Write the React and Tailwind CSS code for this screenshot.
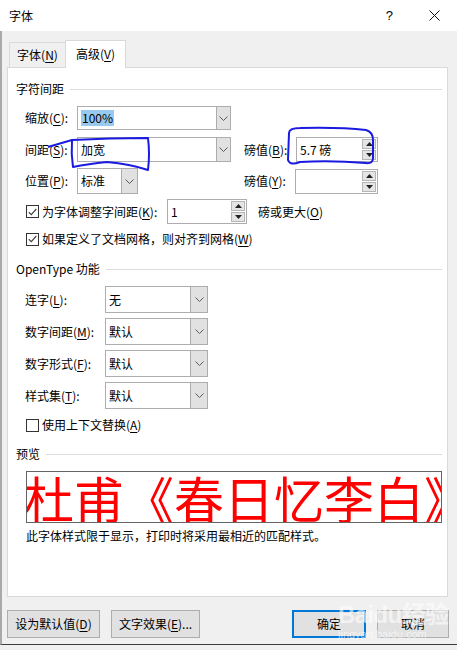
import React from 'react'

const U = ({ children }) => <span className="underline underline-offset-[2px]">{children}</span>

function Chevron() {
    return (
        <svg width="9" height="5" viewBox="0 0 9 5">
            <path d="M0.5 0.5 L4.5 4.5 L8.5 0.5" fill="none" stroke="#5a5a5a" strokeWidth="1" />
        </svg>
    )
}

function Arrow({ up }) {
    return (
        <svg width="7" height="4" viewBox="0 0 7 4">
            {up ? <path d="M0 4 L3.5 0 L7 4 Z" fill="#222" /> : <path d="M0 0 L3.5 4 L7 0 Z" fill="#222" />}
        </svg>
    )
}

function Combo({ box, btn, children }) {
    return (
        <div className={`flex border border-[#adadad] bg-white ${box}`}>
            <div className="flex-1 flex items-center pl-[3px] overflow-hidden">{children}</div>
            <div className={`bg-[#e1e1e1] border-l border-[#adadad] flex items-center justify-center ${btn}`}>
                <Chevron />
            </div>
        </div>
    )
}

function Spin({ box, children }) {
    return (
        <div className={`flex border border-[#adadad] bg-white ${box}`}>
            <div className="flex-1 flex items-center pl-[3px]">{children}</div>
            <div className="flex flex-col w-[15px] py-[1px] pr-[1px] gap-[1px]">
                <div className="flex-1 bg-[#e5e5e5] border border-[#b5b5b5] flex items-center justify-center"><Arrow up /></div>
                <div className="flex-1 bg-[#e5e5e5] border border-[#b5b5b5] flex items-center justify-center"><Arrow /></div>
            </div>
        </div>
    )
}

function Check({ checked }) {
    return (
        <div className="w-[13px] h-[13px] border border-[#333] bg-white flex items-center justify-center">
            {checked && (
                <svg width="9" height="8" viewBox="0 0 9 8">
                    <path d="M0.8 4.2 L3.3 6.6 L8.3 1" fill="none" stroke="#444" strokeWidth="1.2" />
                </svg>
            )}
        </div>
    )
}

function Header({ children }) {
    return (
        <div className="flex items-center pl-[8px] pr-[5px] gap-[6px] h-[16px]">
            <span>{children}</span>
            <div className="flex-1 h-px bg-[#dcdcdc]"></div>
        </div>
    )
}

function App() {
    return (
        <div className="w-[457px] h-[650px] bg-[#f0f0f0] relative overflow-hidden text-[12px] leading-[16px] text-black font-['Noto_Sans_CJK_SC',sans-serif]">
            {/* title bar */}
            <div className="h-[31px] bg-white flex items-center pl-[9px]">
                <span>字体</span>
                <span className="ml-auto mr-[36px] text-[13px] font-['Liberation_Sans',sans-serif]">?</span>
                <svg width="11" height="11" viewBox="0 0 11 11" className="mr-[17px]">
                    <path d="M0.5 0.5 L10.5 10.5 M10.5 0.5 L0.5 10.5" stroke="#111" strokeWidth="1" />
                </svg>
            </div>

            <div className="border-l-2 border-[#a9a9a9] h-[614px] border-b border-b-[#3c3c3c]">
                {/* tabs */}
                <div className="flex items-end pt-[9px] pl-[7px]">
                    <div className="w-[56px] h-[25px] border-l border-t border-[#d9d9d9] flex items-center justify-center">
                        <span>字体(<U>N</U>)</span>
                    </div>
                    <div className="w-[61px] h-[28px] bg-white border-l border-t border-r border-[#d9d9d9] mb-[-1px] relative z-10 flex items-center justify-center pb-[2px]">
                        <span>高级(<U>V</U>)</span>
                    </div>
                </div>

                {/* tab page */}
                <div className="ml-[5px] w-[441px] h-[530px] bg-white border border-[#d9d9d9] flex flex-col">
                    <div className="mt-[13px]"><Header>字符间距</Header></div>

                    <div className="flex items-center h-[24px] mt-[9px] pl-[17px]">
                        <div className="w-[52px]">缩放(<U>C</U>):</div>
                        <Combo box="w-[154px] h-[24px]" btn="w-[14px]">
                            <span className="bg-[#99c9ef] px-[1px]">100%</span>
                        </Combo>
                    </div>

                    <div className="flex items-center h-[25px] mt-[7px] pl-[17px]">
                        <div className="w-[52px]">间距(<U>S</U>):</div>
                        <Combo box="w-[154px] h-[25px]" btn="w-[14px]">加宽</Combo>
                        <div className="w-[52px] ml-[13px]">磅值(<U>B</U>):</div>
                        <Spin box="w-[82px] h-[25px]">5.7 磅</Spin>
                    </div>

                    <div className="flex items-center h-[26px] mt-[6px] pl-[17px]">
                        <div className="w-[52px]">位置(<U>P</U>):</div>
                        <Combo box="w-[61px] h-[26px]" btn="w-[16px]">标准</Combo>
                        <div className="w-[51px] ml-[106px]">磅值(<U>Y</U>):</div>
                        <Spin box="w-[83px] h-[25px]"></Spin>
                    </div>

                    <div className="flex items-center h-[25px] mt-[5px] pl-[18px]">
                        <Check checked />
                        <div className="w-[128px] pl-[3px]">为字体调整字间距(<U>K</U>):</div>
                        <Spin box="w-[80px] h-[25px]">1</Spin>
                        <div className="ml-[11px]">磅或更大(<U>O</U>)</div>
                    </div>

                    <div className="flex items-center h-[16px] mt-[7px] pl-[18px]">
                        <Check checked />
                        <div className="pl-[3px]">如果定义了文档网格，则对齐到网格(<U>W</U>)</div>
                    </div>

                    <div className="mt-[14px]"><Header>OpenType 功能</Header></div>

                    <div className="flex items-center h-[27px] mt-[9px] pl-[17px]">
                        <div className="w-[80px]">连字(<U>L</U>):</div>
                        <Combo box="w-[103px] h-[27px]" btn="w-[17px]">无</Combo>
                    </div>
                    <div className="flex items-center h-[27px] mt-[5px] pl-[17px]">
                        <div className="w-[80px]">数字间距(<U>M</U>):</div>
                        <Combo box="w-[103px] h-[27px]" btn="w-[17px]">默认</Combo>
                    </div>
                    <div className="flex items-center h-[27px] mt-[5px] pl-[17px]">
                        <div className="w-[80px]">数字形式(<U>F</U>):</div>
                        <Combo box="w-[103px] h-[27px]" btn="w-[17px]">默认</Combo>
                    </div>
                    <div className="flex items-center h-[27px] mt-[5px] pl-[17px]">
                        <div className="w-[80px]">样式集(<U>T</U>):</div>
                        <Combo box="w-[103px] h-[27px]" btn="w-[17px]">默认</Combo>
                    </div>

                    <div className="flex items-center h-[16px] mt-[8px] pl-[18px]">
                        <Check />
                        <div className="pl-[3px]">使用上下文替换(<U>A</U>)</div>
                    </div>

                    <div className="mt-[13px]"><Header>预览</Header></div>

                    <div className="ml-[18px] mt-[9px] w-[416px] h-[52px] border border-[#646464] overflow-hidden">
                        <div className="ml-[-3px] whitespace-nowrap text-[50px] leading-[50px] text-[#ff0000]">杜甫《春日忆李白》</div>
                    </div>

                    <div className="pl-[18px] mt-[5px]">此字体样式限于显示，打印时将采用最相近的匹配样式。</div>
                </div>

                {/* buttons */}
                <div className="flex mt-[13px] pl-[5px] pr-[8px] h-[28px]">
                    <div className="w-[93px] bg-[#e1e1e1] border border-[#adadad] flex items-center justify-center">设为默认值(<U>D</U>)</div>
                    <div className="w-[89px] ml-[11px] bg-[#e1e1e1] border border-[#adadad] flex items-center justify-center">文字效果(<U>E</U>)...</div>
                    <div className="w-[74px] ml-auto bg-[#e1e1e1] border-2 border-[#0078d7] flex items-center justify-center">确定</div>
                    <div className="w-[72px] ml-[11px] bg-[#e1e1e1] border border-[#adadad] flex items-center justify-center">取消</div>
                </div>
            </div>

            {/* watermark */}
            <div className="absolute left-[338px] top-[600px] text-white/60 pointer-events-none">
                <div className="text-[24px] leading-[26px] font-bold font-['Liberation_Sans',sans-serif] tracking-tight">Baidu<span className="font-['Noto_Sans_CJK_SC',sans-serif]">经验</span></div>
                <div className="text-[11px] leading-[12px] font-['Liberation_Sans',sans-serif]">jingyan.baidu.com</div>
            </div>

            {/* blue pen marks */}
            <svg className="absolute left-0 top-0 pointer-events-none" width="457" height="650" viewBox="0 0 457 650">
                <path d="M48 147 L72 140 Q110 138 148 138 Q150 154 148 170 Q130 164 107 162 Q88 164 73 167 Q71 154 72 140"
                    fill="none" stroke="#1a1ae0" strokeWidth="2" strokeLinejoin="round" />
                <path d="M289 133 Q289 128 300 128 Q340 127 366 130 Q373 132 373 140 L373 158 Q373 164 366 163 Q330 160 300 162 Q290 166 288 160 Z"
                    fill="none" stroke="#1a1ae0" strokeWidth="2" strokeLinejoin="round" />
            </svg>
        </div>
    )
}

export default App
